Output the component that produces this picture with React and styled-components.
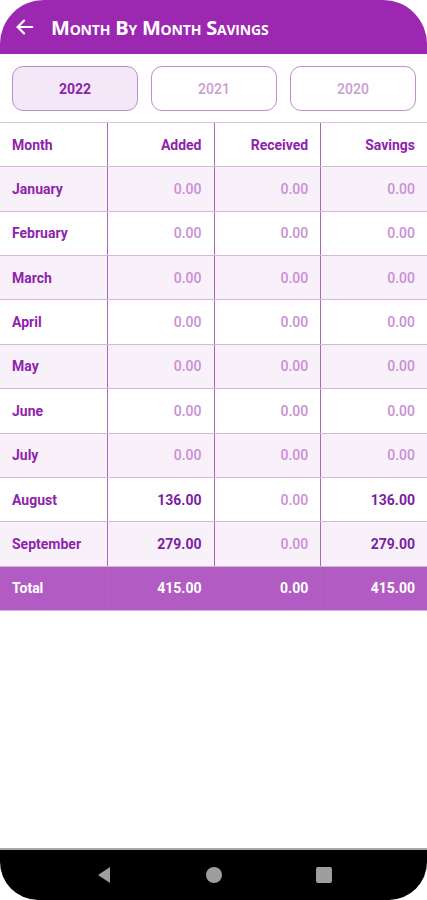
import React from "react";
import styled, { createGlobalStyle } from "styled-components";

const GlobalStyle = createGlobalStyle`
  html, body {
    margin: 0;
    padding: 0;
    background: #fff;
  }
  body {
    font-family: Roboto, "Noto Sans", sans-serif;
  }
`;

const Screen = styled.div`
  width: 427px;
  height: 900px;
  display: flex;
  flex-direction: column;
  background: #fff;
  overflow: hidden;
`;

const Header = styled.header`
  height: 54px;
  flex-shrink: 0;
  display: flex;
  align-items: center;
  gap: 15px;
  padding: 0 14px;
  background: #9c27b0;
  border-radius: 44px 44px 0 0;
  box-sizing: border-box;
`;

const BackButton = styled.button`
  border: 0;
  background: none;
  padding: 0;
  display: flex;
  cursor: pointer;
`;

const Title = styled.h1`
  margin: 0;
  color: #fff;
  font-family: "Open Sans", sans-serif;
  font-size: 20px;
  font-weight: 700;
  font-variant: small-caps;
  letter-spacing: -0.2px;
`;

const YearBar = styled.div`
  display: grid;
  grid-template-columns: repeat(3, 1fr);
  gap: 13px;
  padding: 12px 11px 11px 12px;
`;

const YearButton = styled.button`
  height: 45px;
  border-radius: 11px;
  border: 1.5px solid #c190cc;
  background: ${(p) => (p.active ? "#f4e7f7" : "#fff")};
  color: ${(p) => (p.active ? "#8e24aa" : "#c99ad3")};
  font-family: Roboto, sans-serif;
  font-size: 14px;
  font-weight: ${(p) => (p.active ? 700 : 500)};
  cursor: pointer;
`;

const Table = styled.div`
  border-top: 1px solid #dcc0e2;
`;

const Row = styled.div`
  display: grid;
  grid-template-columns: repeat(4, 1fr);
  height: 44.36px;
  box-sizing: border-box;
  border-bottom: 1px solid #d7b6de;
  background: ${(p) => (p.total ? "#b25cc3" : p.shade ? "#f9f1fa" : "#fff")};
`;

const Cell = styled.div`
  display: flex;
  align-items: center;
  justify-content: ${(p) => (p.left ? "flex-start" : "flex-end")};
  padding: 0 12px;
  font-size: 14px;
  font-weight: ${(p) => (p.strong ? 700 : 500)};
  color: ${(p) => p.color};
  border-left: ${(p) => (p.first ? "0" : "1px solid #a867b8")};
`;

const Spacer = styled.div`
  flex: 1;
`;

const NavBar = styled.nav`
  height: 52px;
  flex-shrink: 0;
  background: #000;
  border-top: 2px solid #a8a8a8;
  border-radius: 0 0 38px 38px;
  display: flex;
  align-items: center;
  justify-content: center;
  gap: 92px;
  box-sizing: border-box;
`;

const months = [
  ["January", "0.00", "0.00", "0.00"],
  ["February", "0.00", "0.00", "0.00"],
  ["March", "0.00", "0.00", "0.00"],
  ["April", "0.00", "0.00", "0.00"],
  ["May", "0.00", "0.00", "0.00"],
  ["June", "0.00", "0.00", "0.00"],
  ["July", "0.00", "0.00", "0.00"],
  ["August", "136.00", "0.00", "136.00"],
  ["September", "279.00", "0.00", "279.00"],
];

const valueColor = (v) => (v === "0.00" ? "#c98fd4" : "#7b1fa2");

export default function App() {
  return (
    <Screen>
      <GlobalStyle />
      <Header>
        <BackButton aria-label="Back">
          <svg width="22" height="22" viewBox="0 0 24 24" fill="none" stroke="#fff" strokeWidth="2.4" strokeLinecap="round" strokeLinejoin="round">
            <path d="M20 12H4" />
            <path d="M11 5l-7 7 7 7" />
          </svg>
        </BackButton>
        <Title>Month By Month Savings</Title>
      </Header>

      <YearBar>
        <YearButton active>2022</YearButton>
        <YearButton>2021</YearButton>
        <YearButton>2020</YearButton>
      </YearBar>

      <Table>
        <Row>
          <Cell first left strong color="#8e24aa">Month</Cell>
          <Cell strong color="#8e24aa">Added</Cell>
          <Cell strong color="#8e24aa">Received</Cell>
          <Cell strong color="#8e24aa">Savings</Cell>
        </Row>
        {months.map(([name, added, received, savings], i) => (
          <Row key={name} shade={i % 2 === 0}>
            <Cell first left strong color="#8e24aa">{name}</Cell>
            <Cell strong={added !== "0.00"} color={valueColor(added)}>{added}</Cell>
            <Cell strong={received !== "0.00"} color={valueColor(received)}>{received}</Cell>
            <Cell strong={savings !== "0.00"} color={valueColor(savings)}>{savings}</Cell>
          </Row>
        ))}
        <Row total>
          <Cell first left strong color="#fff">Total</Cell>
          <Cell strong color="#fff">415.00</Cell>
          <Cell strong color="#fff">0.00</Cell>
          <Cell strong color="#fff">415.00</Cell>
        </Row>
      </Table>

      <Spacer />

      <NavBar>
        <svg width="18" height="18" viewBox="0 0 18 18">
          <path d="M15 1 L3 9 L15 17 Z" fill="#9e9e9e" />
        </svg>
        <svg width="18" height="18" viewBox="0 0 18 18">
          <circle cx="9" cy="9" r="8" fill="#9e9e9e" />
        </svg>
        <svg width="18" height="18" viewBox="0 0 18 18">
          <rect x="1" y="1" width="16" height="16" rx="2" fill="#9e9e9e" />
        </svg>
      </NavBar>
    </Screen>
  );
}
